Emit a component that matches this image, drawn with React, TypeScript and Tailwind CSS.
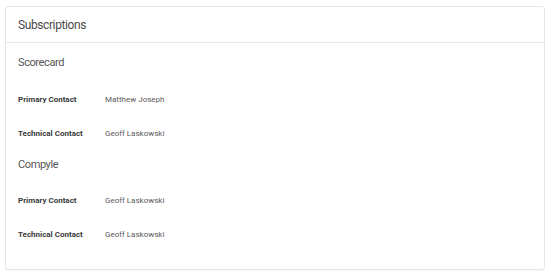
import React from 'react';

interface Contact {
    label: string;
    name: string;
}

interface Subscription {
    product: string;
    contacts: Contact[];
}

const SUBSCRIPTIONS: Subscription[] = [
    {
        product: 'Scorecard',
        contacts: [
            { label: 'Primary Contact', name: 'Matthew Joseph' },
            { label: 'Technical Contact', name: 'Geoff Laskowski' },
        ],
    },
    {
        product: 'Compyle',
        contacts: [
            { label: 'Primary Contact', name: 'Geoff Laskowski' },
            { label: 'Technical Contact', name: 'Geoff Laskowski' },
        ],
    },
];

export default function App() {
    return (
        <div className="w-[551px] h-[277px] bg-white pl-[5px] pr-[6px] pt-[6px] font-['Roboto',sans-serif]">
            <div className="h-[264px] bg-white border border-[#e6e6e6] rounded-[3px] shadow-[0_1px_1px_rgba(0,0,0,0.04)]">
                {/* Header */}
                <div className="h-[36px] flex items-center px-[12px] border-b border-[#e6e6e6]">
                    <h2 className="text-[12px] tracking-[-0.4px] text-[#4a4a4a]">Subscriptions</h2>
                </div>

                {/* Subscription blocks */}
                <div className="px-[12px] pt-[10px] flex flex-col gap-[4px]">
                    {SUBSCRIPTIONS.map((sub, i) => (
                        <div key={sub.product}>
                            <div className={`h-[20px] flex items-center text-[11px] tracking-[-0.4px] text-[#555] ${i === 0 ? 'mb-[10px]' : 'mb-[9px]'}`}>{sub.product}</div>
                            {sub.contacts.map(c => (
                                <div key={c.label} className="h-[34px] flex items-center text-[8px]">
                                    <span className="w-[87px] font-bold text-[#3a3a3a]">{c.label}</span>
                                    <span className="text-[#5a5a5a]">{c.name}</span>
                                </div>
                            ))}
                        </div>
                    ))}
                </div>
            </div>
        </div>
    );
}
